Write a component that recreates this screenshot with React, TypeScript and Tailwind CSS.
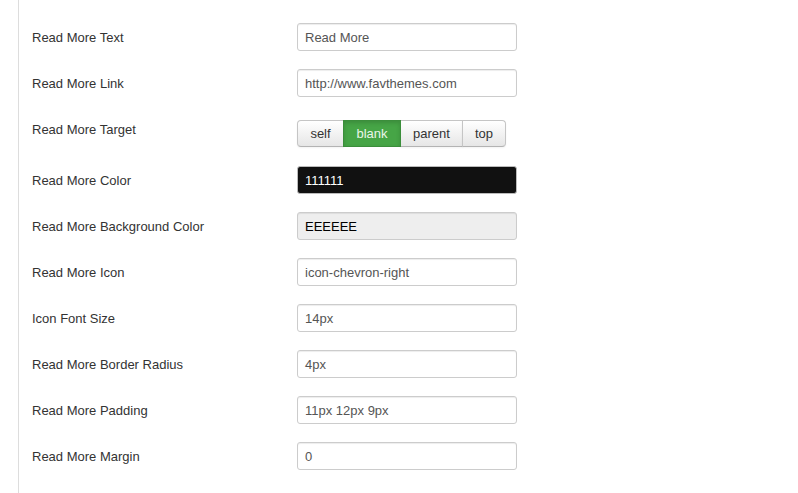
const font = { fontFamily: '"Liberation Sans", Arial, sans-serif' };

type Field = { label: string; value: string; tone?: "dark" | "grey" };

const before: Field[] = [
  { label: "Read More Text", value: "Read More" },
  { label: "Read More Link", value: "http://www.favthemes.com" },
];

const after: Field[] = [
  { label: "Read More Color", value: "111111", tone: "dark" },
  { label: "Read More Background Color", value: "EEEEEE", tone: "grey" },
  { label: "Read More Icon", value: "icon-chevron-right" },
  { label: "Icon Font Size", value: "14px" },
  { label: "Read More Border Radius", value: "4px" },
  { label: "Read More Padding", value: "11px 12px 9px" },
  { label: "Read More Margin", value: "0" },
];

function TextRow({ field }: { field: Field }) {
  const tone =
    field.tone === "dark"
      ? "bg-[#111111] text-white border-[#bbb]"
      : field.tone === "grey"
        ? "bg-[#eeeeee] text-black border-[#ccc]"
        : "bg-white text-[#555] border-[#ccc]";
  return (
    <div className="flex items-start h-[28px] mb-[18px]">
      <label className="w-[265px] shrink-0 pt-px leading-[28px] text-[13px] text-[#333]">{field.label}</label>
      <div
        className={`w-[220px] h-[28px] px-[7px] pt-px leading-[26px] text-[13px] border rounded-[3px] shadow-[inset_0_1px_1px_rgba(0,0,0,0.075)] ${tone}`}
      >
        {field.value}
      </div>
    </div>
  );
}

const targets = [
  { name: "self", width: "w-[47px]" },
  { name: "blank", width: "w-[58px]" },
  { name: "parent", width: "w-[63px]" },
  { name: "top", width: "w-[44px]" },
];

function TargetRow() {
  return (
    <div className="flex items-start h-[33px] mb-[18px]">
      <label className="w-[265px] shrink-0 pt-px leading-[28px] text-[13px] text-[#333]">Read More Target</label>
      <div className="flex mt-[5px]">
        {targets.map((t, i) => {
          const active = t.name === "blank";
          return (
            <button
              key={t.name}
              className={`${t.width} h-[27px] pt-px text-center text-[13px] border ${i > 0 ? "-ml-px" : ""} ${
                i === 0 ? "rounded-l-[4px]" : ""
              } ${i === targets.length - 1 ? "rounded-r-[4px]" : ""} ${
                active
                  ? "relative bg-[#46a546] border-[#3b8e3b] text-[#eaf5ea] shadow-[inset_0_2px_4px_rgba(0,0,0,0.15)]"
                  : "bg-gradient-to-b from-white to-[#e6e6e6] border-[#c5c5c5] border-b-[#b3b3b3] text-[#333] shadow-[0_1px_2px_rgba(0,0,0,0.05)]"
              }`}
            >
              {t.name}
            </button>
          );
        })}
      </div>
    </div>
  );
}

export default function App() {
  return (
    <div className="w-[798px] h-[493px] bg-white flex overflow-hidden" style={font}>
      <div className="w-[18px] shrink-0" />
      <div className="w-px bg-[#dddddd] shrink-0" />
      <div className="pl-[13px] pt-[23px] flex-1">
        {before.map((f) => (
          <TextRow key={f.label} field={f} />
        ))}
        <TargetRow />
        {after.map((f) => (
          <TextRow key={f.label} field={f} />
        ))}
      </div>
    </div>
  );
}
